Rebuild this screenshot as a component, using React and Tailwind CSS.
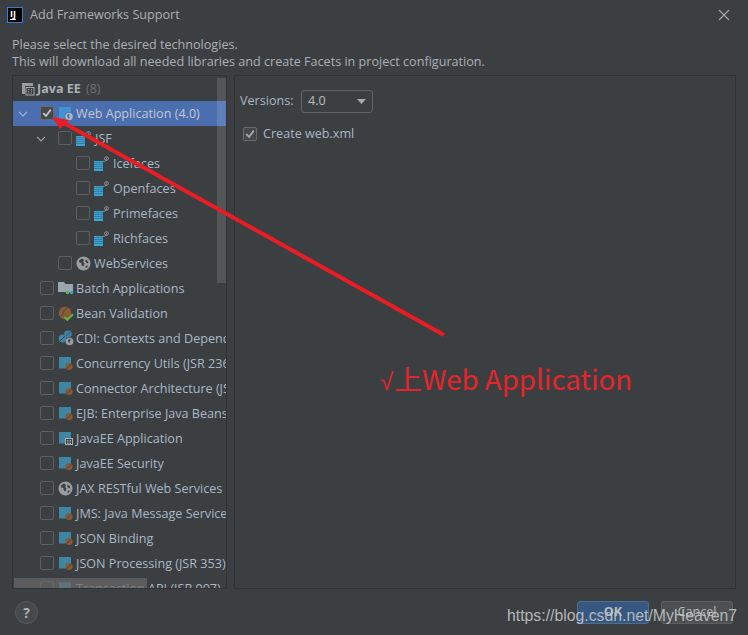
const FONT = { fontFamily: '"Open Sans","Noto Sans",sans-serif' };

function Coffee({ x = 9, y = 9 }) {
  return (
    <g>
      <circle cx={x} cy={y} r="3.6" fill="#8a5a34" />
      <path d={`M${x - 2.6} ${y + 2.4}L${x + 2.6} ${y - 2.4}`} stroke="#3c3f41" strokeWidth="0.9" />
    </g>
  );
}

function Module({ badge }) {
  return (
    <svg width="16" height="17" viewBox="0 0 16 17" className="shrink-0">
      <path d="M1 2h12v7.5a4 4 0 0 0-3.5 4H1z" fill="#3f86a5" />
      {badge === 'ee' ? (
        <g>
          <rect x="7.5" y="8.5" width="7" height="6" fill="#3c3f41" stroke="#afb1b3" strokeWidth="1" />
          <path d="M9 10.5h1.5M9 12h1.5M9 13.5h1.5M11.5 10.5H13M11.5 12H13M11.5 13.5H13" stroke="#afb1b3" strokeWidth="0.9" />
        </g>
      ) : (
        <Coffee x={11} y={11.5} />
      )}
    </svg>
  );
}

function Faces() {
  return (
    <svg width="16" height="15" viewBox="0 0 16 15" className="shrink-0">
      <rect x="0" y="5" width="9" height="10" fill="#3da3d3" />
      <path d="M0 6.5h9M0 8.5h9M0 10.5h9M0 12.5h9" stroke="#2f6f8f" strokeWidth="0.7" />
      <path d="M9 5.5c2.6 0 3-1 3-2.5" stroke="#8d9092" fill="none" strokeWidth="0.9" />
      <circle cx="12.5" cy="2.5" r="1.9" fill="none" stroke="#9da0a2" strokeWidth="0.8" />
      <path d="M12.5 1.6v1.8" stroke="#9da0a2" strokeWidth="0.8" />
    </svg>
  );
}

function Globe() {
  return (
    <svg width="15" height="15" viewBox="0 0 15 15" className="shrink-0">
      <circle cx="7.5" cy="7.5" r="7" fill="#9a9da0" />
      <path d="M3.2 4.2l3-1.6 1.8 1.3-1 1.8 1.6 1.8-1.4 3-1.6-1.2-.2-2.2L3 6.2z" fill="#3c3f41" />
      <path d="M9.5 3.5l2.2 1.5.7 2.5-1.6-.5-1.5-1.6z" fill="#3c3f41" />
      <path d="M10 9.5l2 .3-1.5 2.2-1.2-.4z" fill="#3c3f41" />
    </svg>
  );
}

function WebApp() {
  return (
    <svg width="18" height="17" viewBox="0 0 18 17" className="shrink-0">
      <rect x="1" y="2" width="12" height="12" fill="#3e95cf" />
      <circle cx="11" cy="11.5" r="4.6" fill="#4b6eaf" />
      <circle cx="11" cy="11.5" r="3.8" fill="#a9b5cc" />
      <path d="M8.8 10l2-.9 1 1-1 1 1 1.4-1 1.6-1-.9-.2-1.4z" fill="#4b6eaf" />
    </svg>
  );
}

function Batch() {
  return (
    <svg width="16" height="17" viewBox="0 0 16 17" className="shrink-0">
      <path d="M0 2h6l1.5 2H15v8H0z" fill="#9aa7b0" />
      <circle cx="9.5" cy="12.5" r="1.8" fill="#62b543" />
      <circle cx="13.5" cy="12.5" r="1.8" fill="#3da3d3" />
    </svg>
  );
}

function Bean() {
  return (
    <svg width="16" height="17" viewBox="0 0 16 17" className="shrink-0">
      <circle cx="7" cy="8" r="6.3" fill="#8a5a34" />
      <path d="M3 11C6 9 4 6 9 3" stroke="#3c3f41" strokeWidth="1" fill="none" />
      <path d="M6.5 12l2.8 2.8L15 9.3" stroke="#62b543" strokeWidth="2" fill="none" />
    </svg>
  );
}

function Cdi() {
  return (
    <svg width="16" height="17" viewBox="0 0 16 17" className="shrink-0">
      <ellipse cx="4.5" cy="8.5" rx="3.8" ry="4" fill="#3e86a8" />
      <ellipse cx="10" cy="4" rx="3.8" ry="3.4" fill="#3e86a8" />
      <path d="M2 11l5-5M8 6.2l4.5-4.4" stroke="#3c3f41" strokeWidth="0.9" />
      <circle cx="11.5" cy="11.5" r="3.8" fill="#9a9da0" />
      <path d="M10 10l2-.9.8 1.4-1.3 1 .4 2-1.3-1z" fill="#3c3f41" />
    </svg>
  );
}

function Check({ color = '#a7a9ab' }) {
  return (
    <svg width="10" height="10" viewBox="0 0 10 10">
      <path d="M1.2 5.2L4 8l4.8-6.4" stroke={color} strokeWidth="1.8" fill="none" />
    </svg>
  );
}

function Box({ checked, dark }) {
  return (
    <span
      className={`-mt-[1px] flex h-[14px] w-[14px] shrink-0 items-center justify-center rounded-[2px] border ${
        dark ? 'border-[#6b6b6b] bg-[#43494a]' : 'border-[#5e6060] bg-[#3c3f41]'
      }`}
    >
      {checked && <Check color="#c4c4c4" />}
    </span>
  );
}

function Chevron({ color = '#a0a2a4' }) {
  return (
    <svg width="10" height="6" viewBox="0 0 10 6" className="shrink-0">
      <path d="M1 .8L5 4.8 9 .8" stroke={color} strokeWidth="1.2" fill="none" />
    </svg>
  );
}

function Row({ indent = 'pl-[27px]', chevron, checked, selected, icon, label, iconGap = 'gap-[2px]' }) {
  return (
    <div className={`flex h-[25px] items-center whitespace-nowrap leading-[19px] ${indent} ${selected ? 'bg-[#4b6eaf] text-[#c3c8d4]' : 'text-[#a9b7c6]'}`}>
      {chevron && <span className="-ml-[22px] mr-[12px] flex w-[10px]"><Chevron color={selected ? '#a8b8d8' : '#a0a2a4'} /></span>}
      <Box checked={checked} dark={selected} />
      <span className={`ml-[4px] flex items-center ${iconGap}`}>
        {icon}
        <span>{label}</span>
      </span>
    </div>
  );
}

const rows = [
  { label: 'Batch Applications', icon: <Batch /> },
  { label: 'Bean Validation', icon: <Bean /> },
  { label: 'CDI: Contexts and Dependency Injection', icon: <Cdi /> },
  { label: 'Concurrency Utils (JSR 236)', icon: <Module /> },
  { label: 'Connector Architecture (JSR 322)', icon: <Module /> },
  { label: 'EJB: Enterprise Java Beans', icon: <Module /> },
  { label: 'JavaEE Application', icon: <Module badge="ee" /> },
  { label: 'JavaEE Security', icon: <Module /> },
  { label: 'JAX RESTful Web Services', icon: <Globe />, iconGap: 'gap-[3px]' },
  { label: 'JMS: Java Message Service', icon: <Module /> },
  { label: 'JSON Binding', icon: <Module /> },
  { label: 'JSON Processing (JSR 353)', icon: <Module /> },
  { label: 'Transaction API (JSR 907)', icon: <Module /> },
];

export default function App() {
  return (
    <div className="relative flex h-[635px] w-[748px] flex-col overflow-hidden bg-[#3c3f41] text-[12.6px] text-[#a9b0b6]" style={FONT}>
      <header className="flex h-[30px] shrink-0 items-center pl-[7px] pr-[18px]">
        <span className="flex h-[16px] w-[16px] flex-col border border-[#2f7fd6] bg-black pl-[2px] pt-[1px] text-[9px] font-bold leading-[9px] text-white">
          IJ
          <span className="mt-[1px] h-[1px] w-[6px] bg-white" />
        </span>
        <span className="ml-[7px] text-[#a9b0b6]">Add Frameworks Support</span>
        <svg width="12" height="12" viewBox="0 0 12 12" className="ml-auto">
          <path d="M1 1l10 10M11 1L1 11" stroke="#a7a9ab" strokeWidth="1.1" />
        </svg>
      </header>
      <div className="mt-[6px] pl-[12px] leading-[17px]">
        <p>Please select the desired technologies.</p>
        <p>This will download all needed libraries and create Facets in project configuration.</p>
      </div>
      <main className="mt-[5px] flex h-[514px] gap-[7px] px-[12px]">
        <section className="relative w-[215px] shrink-0 overflow-hidden border border-[#323232]">
          <div className="flex h-[25px] items-center pl-[8px] leading-[19px]">
            <svg width="14" height="14" viewBox="0 0 14 14">
              <path d="M1 1h11v3H1zM1 4h3v8H1z" fill="#9a9da0" />
              <rect x="5" y="5.5" width="8" height="7.5" fill="#3c3f41" stroke="#a7a9ab" />
              <path d="M7 7.5h1.2M7 9.2h1.2M7 11h1.2M9.8 7.5H11M9.8 9.2H11M9.8 11H11" stroke="#a7a9ab" strokeWidth="0.9" />
            </svg>
            <span className="ml-[2px] font-bold text-[#a9b0b6]">Java EE</span>
            <span className="ml-[5px] text-[#6e7071]">(8)</span>
          </div>
          <Row chevron checked selected icon={<WebApp />} label="Web Application (4.0)" iconGap="gap-0" />
          <Row indent="pl-[45px]" chevron icon={<Faces />} label="JSF" iconGap="gap-[3px]" />
          <Row indent="pl-[63px]" icon={<Faces />} label="Icefaces" iconGap="gap-[3px]" />
          <Row indent="pl-[63px]" icon={<Faces />} label="Openfaces" iconGap="gap-[3px]" />
          <Row indent="pl-[63px]" icon={<Faces />} label="Primefaces" iconGap="gap-[3px]" />
          <Row indent="pl-[63px]" icon={<Faces />} label="Richfaces" iconGap="gap-[3px]" />
          <Row indent="pl-[45px]" icon={<Globe />} label="WebServices" iconGap="gap-[3px]" />
          {rows.map((r) => (
            <Row key={r.label} icon={r.icon} label={r.label} iconGap={r.iconGap} />
          ))}
          <div className="absolute right-0 top-[2px] h-[205px] w-[9px] bg-[#ffffff]/[0.12]" />
          <div className="absolute bottom-0 left-[1px] h-[10px] w-[133px] bg-[#6a6a6a]/70" />
        </section>
        <section className="flex-1 border border-[#323232] px-[5px] pt-[14px]">
          <div className="flex items-center">
            <span className="w-[61px] text-[#a9b7c6]">Versions:</span>
            <span className="flex h-[23px] w-[72px] items-center justify-between rounded-[3px] border border-[#646464] pl-[6px] pr-[6px] text-[#bbbbbb]">
              4.0
              <svg width="9" height="5" viewBox="0 0 9 5"><path d="M0 0h9L4.5 5z" fill="#a7a9ab" /></svg>
            </span>
          </div>
          <div className="mt-[12px] flex items-center pl-[3px] leading-[18px]">
            <span className="flex h-[14px] w-[14px] items-center justify-center rounded-[2px] border border-[#6b6b6b] bg-[#43494a]">
              <Check />
            </span>
            <span className="ml-[6px] text-[#a9b7c6]">Create web.xml</span>
          </div>
        </section>
      </main>
      <footer className="flex flex-1 items-center justify-between pl-[15px] pr-[15px]">
        <span className="flex h-[23px] w-[23px] items-center justify-center rounded-full border border-[#565a5c] bg-[#45494a] text-[14px] font-bold text-[#b0b2b4]">?</span>
        <div className="mt-[1px] flex gap-[12px] text-[12.6px]">
          <span className="flex h-[23px] w-[72px] items-center justify-center rounded-[3px] border border-[#4c708c] bg-[#365880] font-bold text-[#bbbbbb]">OK</span>
          <span className="flex h-[23px] w-[72px] items-center justify-center rounded-[3px] border border-[#5e6060] bg-[#4c5052] text-[#bbbbbb]">Cancel</span>
        </div>
      </footer>
      <svg className="pointer-events-none absolute left-0 top-0" width="748" height="635" viewBox="0 0 748 635">
        <path d="M444 335L62 122" stroke="#ea1c24" strokeWidth="4" />
        <path d="M52 117L69 120L60 129z" fill="#ea1c24" />
      </svg>
      <span
        className="absolute left-[380px] top-[359px] whitespace-nowrap text-[27.7px] leading-[38px] text-[#e8232a]"
        style={{ fontFamily: '"Noto Sans CJK SC","Noto Sans",sans-serif' }}
      >
        <span className="text-[24px]" style={{ fontFamily: '"Liberation Sans",sans-serif' }}>√</span>
        <span className="ml-[1px]">上</span>Web Application
      </span>
      <span
        className="absolute left-[507px] top-[605px] whitespace-nowrap text-[15.8px] leading-[22px] text-[#c4c5c6]/90"
        style={{ fontFamily: '"Liberation Sans",sans-serif' }}
      >
        https://blog.csdn.net/MyHeaven7
      </span>
    </div>
  );
}
